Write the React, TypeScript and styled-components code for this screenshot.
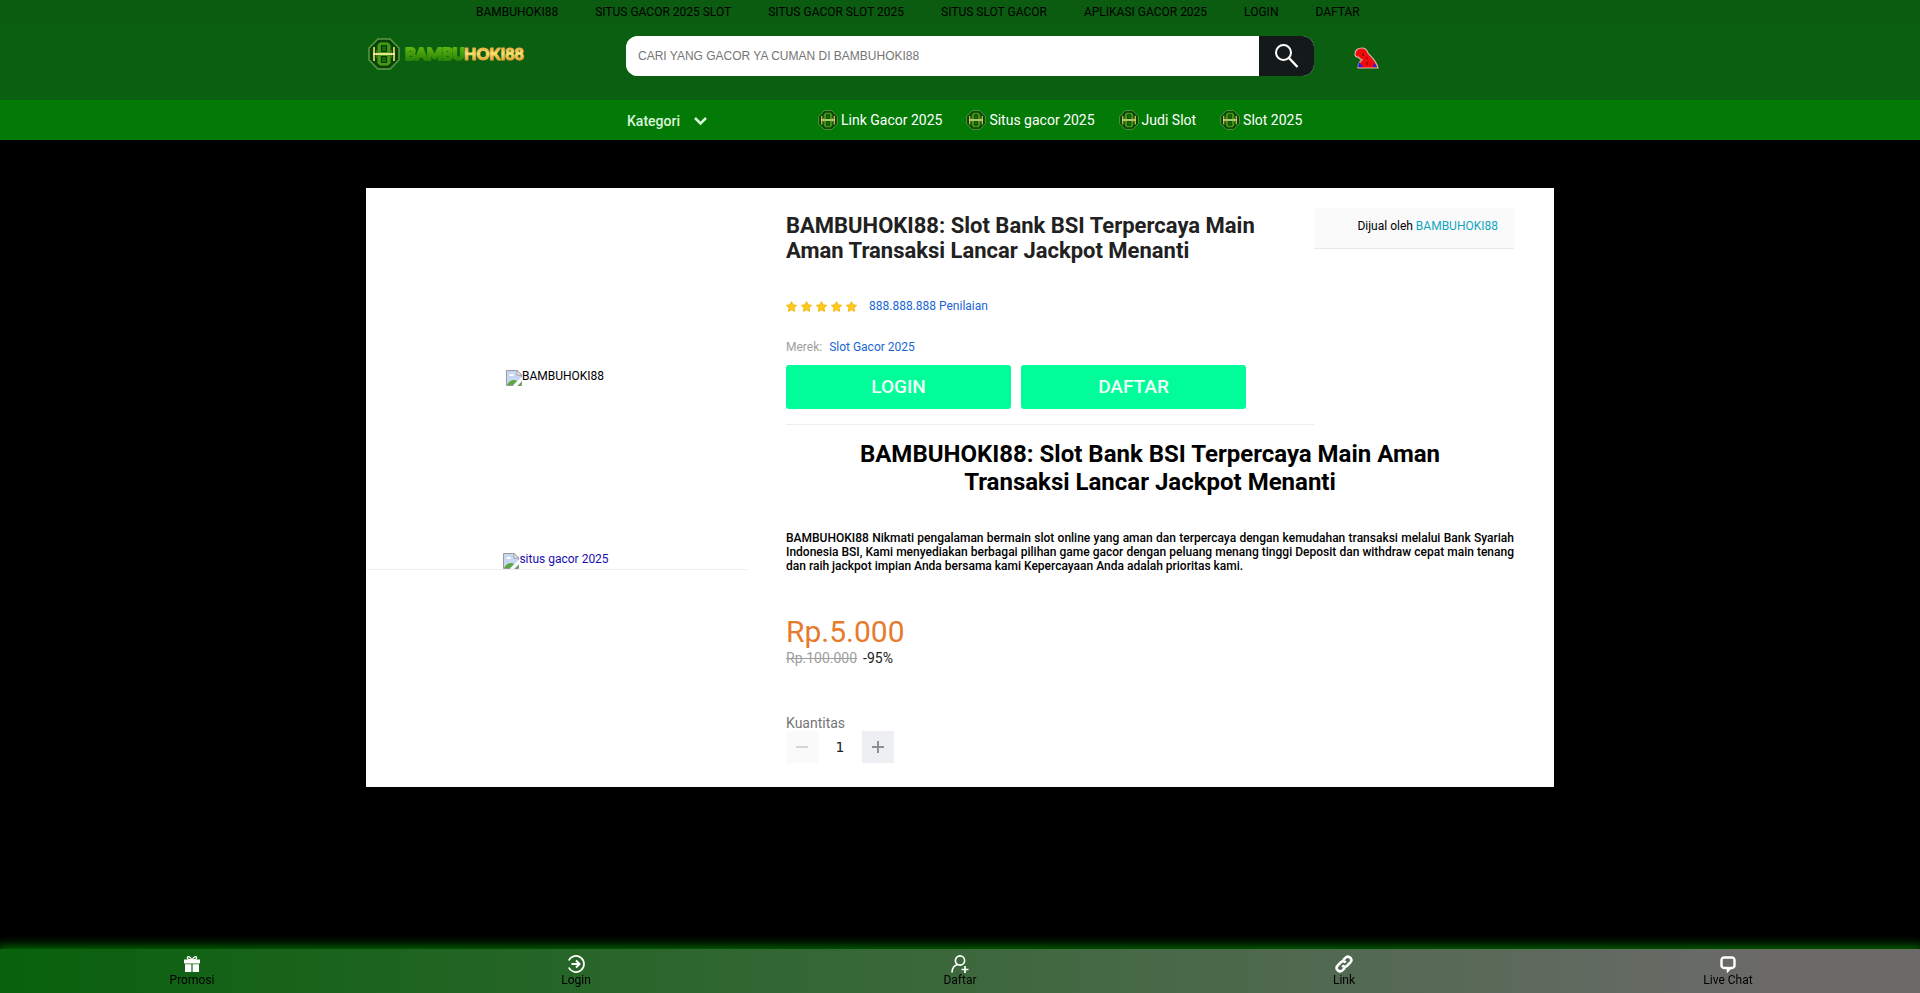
import React, { useState } from "react";
import styled, { createGlobalStyle } from "styled-components";

const GlobalStyle = createGlobalStyle`
  * { box-sizing: border-box; }
  body {
    margin: 0;
    background: #000;
    color: #000;
    font: 12px/14px Roboto, sans-serif;
  }
  a { color: inherit; text-decoration: none; }
  h1, h2, p { margin: 0; }
`;

const Page = styled.div`
  min-height: 100vh;
  display: flex;
  flex-direction: column;
`;

const Header = styled.header`
  background: #0a5f10;
`;

const Container = styled.div`
  width: 100%;
  max-width: 1188px;
  margin: 0 auto;
`;

const TopBar = styled.div`
  height: 24px;
  background: #0b5b10;
`;

const TopLinks = styled(Container)`
  display: flex;
  align-items: center;
  height: 24px;
  gap: 37px;
  padding-left: 110px;
`;

const SearchRow = styled(Container)`
  display: flex;
  height: 76px;
  padding-top: 12px;
`;

const LogoLink = styled.a`
  display: flex;
  align-items: center;
  width: 260px;
  height: 36px;
  padding-left: 2px;
`;

const SearchForm = styled.form`
  display: flex;
  flex: 0 1 688px;
  height: 40px;
  border-radius: 12px;
  overflow: hidden;
  background: #fff;
`;

const SearchInput = styled.input`
  flex: 1;
  min-width: 0;
  border: 0;
  outline: 0;
  padding: 0 12px;
  background: #fff;
  font: 12px/16px "Liberation Sans", Arial, sans-serif;
  &::placeholder { color: #757575; opacity: 1; }
`;

const SearchButton = styled.button`
  display: flex;
  align-items: center;
  justify-content: center;
  width: 55px;
  border: 0;
  padding: 0;
  background: #14191a;
`;

const HeroLink = styled.a`
  display: flex;
  align-items: center;
  height: 44px;
  margin-left: 40px;
`;

const NavBar = styled.nav`
  background: #037a06;
  color: #fff;
`;

const NavRow = styled(Container)`
  display: flex;
  align-items: center;
  height: 40px;
  padding-left: 261px;
  font-size: 14px;
  line-height: 16px;
`;

const CategoryButton = styled.button`
  display: flex;
  align-items: center;
  gap: 14px;
  width: 191px;
  border: 0;
  padding: 2px 0 0;
  background: none;
  color: #d9f5da;
  font: 500 14px/16px Roboto, sans-serif;
`;

const NavLinks = styled.div`
  display: flex;
  gap: 24px;
`;

const NavLink = styled.a`
  display: flex;
  align-items: center;
  gap: 3px;
`;

const Card = styled.main`
  display: grid;
  grid-template-columns: 382px 1fr;
  column-gap: 38px;
  width: 100%;
  max-width: 1188px;
  min-height: 599px;
  margin: 48px auto 162px;
  padding-right: 40px;
  background: #fff;
`;

const Gallery = styled.section`
  display: flex;
  flex-direction: column;
  align-self: start;
  height: 382px;
  border-bottom: 1px solid #eee;
`;

const MainImage = styled.div`
  flex: 1;
  display: flex;
  align-items: center;
  justify-content: center;
  padding: 14px 4px 0 0;
`;

const ThumbLink = styled.a`
  display: flex;
  justify-content: center;
  padding-right: 2px;
  color: #1a0db0;
`;

const MissingImage = styled.span`
  display: flex;
  height: 16px;
  line-height: 12px;
`;

const Detail = styled.section`
  padding-top: 20px;
`;

const DetailTop = styled.div`
  display: grid;
  grid-template-columns: 1fr 200px;
`;

const Summary = styled.div`
  border-bottom: 1px solid #eee;
  padding: 5px 40px 15px 0;
`;

const Title = styled.h1`
  color: #212121;
  font-size: 22px;
  line-height: 25px;
  font-weight: 700;
`;

const Rating = styled.div`
  display: flex;
  align-items: center;
  gap: 4px;
  margin-top: 36px;
`;

const BlueLink = styled.a<{ $indent?: number }>`
  margin-left: ${(p) => p.$indent ?? 0}px;
  color: #1a66d6;
`;

const Brand = styled.div`
  margin-top: 27px;
  color: #9e9e9e;
`;

const Actions = styled.div`
  display: flex;
  gap: 10px;
  margin-top: 11px;
`;

const ActionButton = styled.button`
  flex: 0 1 225px;
  height: 44px;
  border: 0;
  border-radius: 3px;
  background: #00fd9a;
  color: #f2fff9;
  font: 500 19px/24px Roboto, sans-serif;
`;

const Seller = styled.aside`
  align-self: start;
  height: 41px;
  padding: 11px 16px;
  border-bottom: 1px solid #e8e8e8;
  background: #fafafa;
  text-align: right;
`;

const SellerLink = styled.a`
  color: #12a5c0;
`;

const Heading = styled.h2`
  margin-top: 15px;
  padding: 0 60px;
  text-align: center;
  font-size: 24px;
  line-height: 28px;
  font-weight: 700;
`;

const Description = styled.p`
  margin-top: 35px;
  font-weight: 500;
  text-align: justify;
`;

const Price = styled.div`
  margin-top: 41px;
  color: #e87a2e;
  font-size: 30px;
  line-height: 36px;
`;

const Discount = styled.div`
  display: flex;
  gap: 6px;
  color: #212121;
  font-size: 14px;
  line-height: 16px;
`;

const OldPrice = styled.s`
  color: #9e9e9e;
`;

const QuantityLabel = styled.label`
  display: block;
  margin-top: 49px;
  color: #757575;
  font-size: 14px;
  line-height: 16px;
`;

const Stepper = styled.div`
  display: flex;
`;

const StepButton = styled.button`
  display: flex;
  align-items: center;
  justify-content: center;
  width: 32px;
  height: 32px;
  border: 0;
  padding: 0;
  background: #eeeff2;
  color: #8d8f94;
  &:disabled { background: #fafafa; color: #d5d5d5; }
`;

const QuantityInput = styled.input`
  width: 44px;
  border: 0;
  padding: 0;
  background: none;
  color: #212121;
  text-align: center;
  font: 14px/16px "DejaVu Sans", sans-serif;
`;

const BottomBar = styled.nav`
  position: fixed;
  inset: auto 0 0;
  display: grid;
  grid-template-columns: repeat(5, 1fr);
  height: 44px;
  background: linear-gradient(90deg, #08610c, #3c683c 50%, #6b6a69 92%);
  box-shadow: 0 0 10px 3px #007000;
`;

const BottomLink = styled.a`
  display: flex;
  flex-direction: column;
  align-items: center;
  padding-top: 6px;
`;

function Emblem({ size }: { size: number }) {
  return (
    <svg width={size} height={size} viewBox="0 0 32 32" aria-hidden="true">
      <path d="M10 1h12l9 9v12l-9 9H10l-9-9V10z" fill="#0a4209" stroke="#5c9e46" strokeWidth="1.4" />
      <path d="M6 9v14M26 9v14M9.500 12v8M22.500 12v8" stroke="#e3cf5c" strokeWidth="1.800" />
      <path d="M12 4h8l3 3v7l-2 2 2 2v7l-3 3h-8l-3-3v-7l2-2-2-2V7z" fill="#459a14" stroke="#0b4509" strokeWidth=".8" />
      <path d="M13.500 7.500h5v6h-5zM13.500 18.500h5v6h-5z" fill="#1b6a12" stroke="#0b3a08" strokeWidth="1.200" />
      <path d="M5 16h22" stroke="#f7efa0" strokeWidth="1.800" />
    </svg>
  );
}

function Logo() {
  return (
    <svg width="164" height="36" viewBox="0 0 164 36" role="img" aria-label="BAMBUHOKI88">
      <defs>
        <linearGradient id="leaf" x1="0" y1="0" x2="0" y2="1">
          <stop offset="0" stopColor="#6cc010" />
          <stop offset="1" stopColor="#1e7a08" />
        </linearGradient>
        <linearGradient id="gold" x1="0" y1="0" x2="0" y2="1">
          <stop offset="0" stopColor="#d8902a" />
          <stop offset="0.5" stopColor="#ffe070" />
          <stop offset="1" stopColor="#cf8a20" />
        </linearGradient>
      </defs>
      <g transform="translate(0 2)"><Emblem size={32} /></g>
      <g fontFamily="Lato, sans-serif" fontWeight="900" fontSize="16" strokeWidth="2" strokeLinejoin="round">
        <text x="37" y="24" fill="url(#leaf)" stroke="url(#leaf)">BAMBU</text>
        <text x="96" y="24" fill="url(#gold)" stroke="url(#gold)" strokeWidth="1">HOKI88</text>
      </g>
    </svg>
  );
}

function Star() {
  return (
    <svg width="11" height="11" viewBox="0 0 24 24" aria-hidden="true">
      <path d="M12 2l3.200 6.300 7.300 1-5.400 5.200 1.400 7.500-6.500-3.500L5.500 22l1.400-7.500L1.500 9.300l7.300-1z" fill="#fbcc1b" stroke="#f6bd1c" strokeWidth="2.800" strokeLinejoin="round" />
    </svg>
  );
}

function BrokenIcon() {
  return (
    <svg width="16" height="16" viewBox="0 0 16 16" aria-hidden="true">
      <path d="M.5.500H11L15.500 5v10.500H.5z" fill="#c6d7f3" stroke="#9a9a9a" />
      <path d="M11 .500V5h4.500z" fill="#fff" stroke="#9a9a9a" />
      <path d="M3 6a2 2 0 0 1 2-2 2 2 0 0 1 3 2z" fill="#fff" />
      <path d="M1 15c2-4 5-5.500 8-5l2 1-4 4z" fill="#5aa63f" />
      <path d="M16 6.500V11l-5 5H7z" fill="#fff" />
      <path d="M12 15.500h3.500V12z" fill="#5aa63f" />
    </svg>
  );
}

const iconProps = {
  width: 18,
  height: 18,
  viewBox: "0 0 18 18",
  fill: "none",
  stroke: "#fff",
  strokeWidth: 1.7,
  "aria-hidden": true,
} as const;

const bottomItems = [
  {
    label: "Promosi",
    icon: (
      <svg {...iconProps}>
        <path d="M1 4.500h16v4H1zM2 9.300h6.400V17H2zM9.600 9.300H16V17H9.600z" fill="#fff" stroke="none" />
        <path d="M9 5C7 .800 4 1 4.400 3.200 4.600 4.500 6 5 9 5zM9 5c2-4.200 5-4 4.600-1.800C13.400 4.500 12 5 9 5z" strokeWidth="1.300" />
      </svg>
    ),
  },
  {
    label: "Login",
    icon: (
      <svg {...iconProps}>
        <path d="M1.800 5.500a8 8 0 1 1 0 7" />
        <path d="M4.500 9H12M9 5.500L12.500 9 9 12.500" strokeWidth="2" />
      </svg>
    ),
  },
  {
    label: "Daftar",
    icon: (
      <svg {...iconProps}>
        <circle cx="9" cy="5.500" r="4.600" />
        <path d="M1 17.500c0-4 2.500-7 5.500-8M14 11v7M10.500 14.500h7" />
      </svg>
    ),
  },
  {
    label: "Link",
    icon: (
      <svg {...iconProps} strokeWidth={2.6}>
        <path d="M7.200 10.500a3.500 3.500 0 0 0 4.900.2l3.300-3.300a3.400 3.400 0 0 0-4.800-4.800L8 5.200" />
        <path d="M10.800 7.500a3.500 3.500 0 0 0-4.900-.2l-3.300 3.300a3.400 3.400 0 0 0 4.800 4.800L10 12.800" />
      </svg>
    ),
  },
  {
    label: "Live Chat",
    icon: (
      <svg {...iconProps} strokeWidth={2.4}>
        <path d="M5 2.500h8a2.500 2.500 0 0 1 2.500 2.500v5.500A2.500 2.500 0 0 1 13 13h-1.500L9 15.500V13H5a2.500 2.500 0 0 1-2.500-2.500V5A2.500 2.500 0 0 1 5 2.500z" />
      </svg>
    ),
  },
];

const topItems = [
  "BAMBUHOKI88",
  "SITUS GACOR 2025 SLOT",
  "SITUS GACOR SLOT 2025",
  "SITUS SLOT GACOR",
  "APLIKASI GACOR 2025",
  "LOGIN",
  "DAFTAR",
];

const navItems = ["Link Gacor 2025", "Situs gacor 2025", "Judi Slot", "Slot 2025"];

export default function App() {
  const [quantity, setQuantity] = useState(1);

  return (
    <Page>
      <GlobalStyle />
      <Header>
        <TopBar>
          <TopLinks>
            {topItems.map((item) => (
              <a href="#" key={item}>{item}</a>
            ))}
          </TopLinks>
        </TopBar>
        <SearchRow>
          <LogoLink href="#"><Logo /></LogoLink>
          <SearchForm onSubmit={(e) => e.preventDefault()}>
            <SearchInput aria-label="Cari" placeholder="CARI YANG GACOR YA CUMAN DI BAMBUHOKI88" />
            <SearchButton aria-label="Cari">
              <svg width="24" height="24" viewBox="0 0 24 24" fill="none" stroke="#fff" strokeWidth="2" aria-hidden="true">
                <circle cx="8.500" cy="8.500" r="7.500" />
                <path d="M13.500 13.500l9 9.500" strokeWidth="2.400" />
              </svg>
            </SearchButton>
          </SearchForm>
          <HeroLink href="#" aria-label="Promo">
            <svg width="25" height="22" viewBox="0 0 25 22" aria-hidden="true">
              <path d="M1 7C1 3 4 1 8 1c3 0 5 2 6 5 3 4 8 7 10 15H4c0-4 1-6 4-8-2-1-3-2-4-3-2 0-3-1-3-3z" fill="#f00a0a" stroke="#d8b8b0" strokeWidth="1.200" />
              <path d="M4 20l1-5 4 5zM19 20l1-4 3 4z" fill="#1c1cf0" />
              <path d="M9 6v3M13 10v2M13 15v3" stroke="#7d0b12" strokeWidth="1.200" />
            </svg>
          </HeroLink>
        </SearchRow>
      </Header>
      <NavBar>
        <NavRow>
          <CategoryButton>
            Kategori
            <svg width="13" height="9" viewBox="0 0 13 9" fill="none" stroke="#d9f5da" strokeWidth="2.500" aria-hidden="true">
              <path d="M1 1l5.500 5.500L12 1" />
            </svg>
          </CategoryButton>
          <NavLinks>
            {navItems.map((item) => (
              <NavLink href="#" key={item}>
                <Emblem size={20} />
                {item}
              </NavLink>
            ))}
          </NavLinks>
        </NavRow>
      </NavBar>
      <Card>
        <Gallery>
          <MainImage>
            <MissingImage><BrokenIcon />BAMBUHOKI88</MissingImage>
          </MainImage>
          <ThumbLink href="#">
            <MissingImage><BrokenIcon />situs gacor 2025</MissingImage>
          </ThumbLink>
        </Gallery>
        <Detail>
          <DetailTop>
            <Summary>
              <Title>BAMBUHOKI88: Slot Bank BSI Terpercaya Main Aman Transaksi Lancar Jackpot Menanti</Title>
              <Rating>
                {[1, 2, 3, 4, 5].map((n) => <Star key={n} />)}
                <BlueLink href="#" $indent={8}>888.888.888 Penilaian</BlueLink>
              </Rating>
              <Brand>
                Merek: <BlueLink href="#" $indent={4}>Slot Gacor 2025</BlueLink>
              </Brand>
              <Actions>
                <ActionButton>LOGIN</ActionButton>
                <ActionButton>DAFTAR</ActionButton>
              </Actions>
            </Summary>
            <Seller>
              Dijual oleh <SellerLink href="#">BAMBUHOKI88</SellerLink>
            </Seller>
          </DetailTop>
          <Heading>BAMBUHOKI88: Slot Bank BSI Terpercaya Main Aman Transaksi Lancar Jackpot Menanti</Heading>
          <Description>
            BAMBUHOKI88 Nikmati pengalaman bermain slot online yang aman dan terpercaya dengan kemudahan transaksi melalui Bank Syariah Indonesia BSI, Kami menyediakan berbagai pilihan game gacor dengan peluang menang tinggi Deposit dan withdraw cepat main tenang dan raih jackpot impian Anda bersama kami Kepercayaan Anda adalah prioritas kami.
          </Description>
          <Price>Rp.5.000</Price>
          <Discount>
            <OldPrice>Rp.100.000</OldPrice>
            <span>-95%</span>
          </Discount>
          <QuantityLabel htmlFor="quantity">Kuantitas</QuantityLabel>
          <Stepper>
            <StepButton aria-label="Kurangi" disabled={quantity <= 1} onClick={() => setQuantity(quantity - 1)}>
              <svg width="12" height="12" viewBox="0 0 12 12" stroke="currentColor" strokeWidth="2" aria-hidden="true">
                <path d="M0 6h12" />
              </svg>
            </StepButton>
            <QuantityInput id="quantity" value={quantity} onChange={(e) => setQuantity(Number(e.target.value) || 1)} />
            <StepButton aria-label="Tambah" onClick={() => setQuantity(quantity + 1)}>
              <svg width="12" height="12" viewBox="0 0 12 12" stroke="currentColor" strokeWidth="2" aria-hidden="true">
                <path d="M0 6h12M6 0v12" />
              </svg>
            </StepButton>
          </Stepper>
        </Detail>
      </Card>
      <BottomBar>
        {bottomItems.map((item) => (
          <BottomLink href="#" key={item.label}>
            {item.icon}
            {item.label}
          </BottomLink>
        ))}
      </BottomBar>
    </Page>
  );
}
